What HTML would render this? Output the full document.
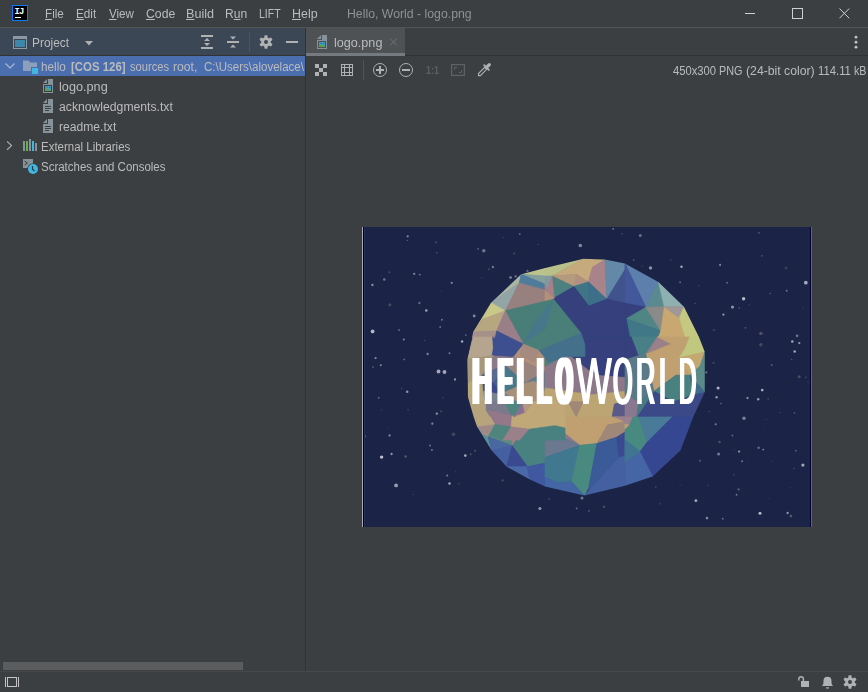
<!DOCTYPE html>
<html><head><meta charset="utf-8"><title>Hello, World - logo.png</title>
<style>
html,body{margin:0;padding:0;}
body{width:868px;height:692px;overflow:hidden;background:#3c3f41;position:relative;font-family:"Liberation Sans",sans-serif;font-size:12px;color:#bbbbbb;}
.a{position:absolute;}
svg{position:absolute;overflow:visible;}
.t{position:absolute;white-space:nowrap;line-height:14px;height:14px;transform-origin:0 0;}
.t span{display:inline-block;}
.g{position:absolute;font-family:"Liberation Sans",sans-serif;font-size:200px;line-height:200px;color:#fff;transform-origin:0 0;white-space:nowrap;}
u{text-decoration:underline;text-underline-offset:1px;text-decoration-thickness:1px;}
</style></head><body>
<!-- menubar -->
<div class="a" style="left:0;top:27px;width:868px;height:1px;background:#555351;"></div>
<svg style="left:12px;top:5px" width="16" height="16" viewBox="0 0 16 16"><rect x="0.5" y="0.5" width="15" height="15" fill="#000" stroke="#087cfa"/><rect x="3" y="12" width="6" height="1" fill="#fff"/><text x="2.5 6.900" y="9" font-family="Liberation Mono, monospace" font-weight="bold" font-size="8.800" fill="#fff" transform="translate(0 0)">IJ</text></svg>
<div class="t" style="left:44.6px;top:7px;transform:scaleX(0.972);"><u>F</u>ile</div>
<div class="t" style="left:75.6px;top:7px;transform:scaleX(0.975);"><u>E</u>dit</div>
<div class="t" style="left:108.9px;top:7px;transform:scaleX(0.966);"><u>V</u>iew</div>
<div class="t" style="left:145.6px;top:7px;transform:scaleX(1.02);"><u>C</u>ode</div>
<div class="t" style="left:186.1px;top:7px;transform:scaleX(1.051);"><u>B</u>uild</div>
<div class="t" style="left:225.2px;top:7px;transform:scaleX(1.007);">R<u>u</u>n</div>
<div class="t" style="left:259.1px;top:7px;transform:scaleX(0.873);">LIFT</div>
<div class="t" style="left:291.6px;top:7px;transform:scaleX(1.035);"><u>H</u>elp</div>
<div class="t" style="left:347.2px;top:7px;transform:scaleX(1.023);color:#8f9192">Hello, World - logo.png</div>
<svg style="left:738px;top:0" width="130" height="27" viewBox="0 0 130 27" fill="none" stroke="#cfcfcf" stroke-width="1"><path d="M7 13.5H17"/><rect x="54.5" y="8.5" width="10" height="10"/><path d="M101.500 8.500L111.200 18.200M111.200 8.500L101.500 18.200"/></svg>

<!-- sidebar -->
<div class="a" style="left:0;top:28px;width:305px;height:27px;background:#3b4754;"></div>
<div class="a" style="left:0;top:55px;width:868px;height:1px;background:#323232;"></div>
<svg style="left:12px;top:34px" width="16" height="16" viewBox="0 0 16 16"><rect x="1" y="2" width="14" height="13" fill="#8c98a2"/><rect x="2" y="5" width="12" height="9" fill="#3b4754"/><rect x="3" y="6" width="10" height="7" fill="#3d87ab"/></svg>
<div class="t" style="left:31.8px;top:36px;transform:scaleX(0.99);">Project</div>
<svg style="left:80px;top:34px" width="16" height="16" viewBox="0 0 16 16"><path d="M5 7H13L9 11.5Z" fill="#aeb0b2"/></svg>
<svg style="left:199px;top:34px" width="16" height="16" viewBox="0 0 16 16" fill="#afb1b3"><rect x="2" y="1" width="12" height="2"/><rect x="2" y="13" width="12" height="2"/><path d="M8 4L11 7H5ZM8 12L5 9H11Z"/></svg>
<svg style="left:225px;top:34px" width="16" height="16" viewBox="0 0 16 16" fill="#afb1b3"><rect x="2" y="7" width="12" height="2"/><path d="M8 5.5L5 2.5H11ZM8 10.5L11 13.5H5Z"/></svg>
<div class="a" style="left:249px;top:32px;width:1px;height:20px;background:#55524f;"></div>
<svg style="left:258px;top:34px" width="16" height="16" viewBox="0 0 16 16"><g id="gear" fill="#afb1b3"><path fill-rule="evenodd" d="M6.20 3.66L6.65 1.30L9.35 1.30L9.80 3.66L10.35 3.93L10.86 4.27L13.13 3.48L14.48 5.82L12.66 7.39L12.70 8.00L12.66 8.61L14.48 10.18L13.13 12.52L10.86 11.73L10.35 12.07L9.80 12.34L9.35 14.70L6.65 14.70L6.20 12.34L5.65 12.07L5.14 11.73L2.87 12.52L1.52 10.18L3.34 8.61L3.30 8.00L3.34 7.39L1.52 5.82L2.87 3.48L5.14 4.27L5.65 3.93ZM8 6.0a2.0 2.0 0 100 4.0a2.0 2.0 0 100 -4.0z"/></g></svg>
<svg style="left:284px;top:34px" width="16" height="16" viewBox="0 0 16 16" fill="#afb1b3"><rect x="2" y="7" width="12" height="2"/></svg>

<div class="a" style="left:0;top:56px;width:305px;height:20px;background:#4b6eaf;"></div>
<svg style="left:2px;top:58px" width="16" height="16" viewBox="0 0 16 16" fill="none" stroke="#a9b7d0" stroke-width="1.2"><path d="M3.5 5.5L8 10L12.5 5.5"/></svg>
<svg style="left:22px;top:58px" width="16" height="16" viewBox="0 0 16 16"><path d="M1 2.5H6.5L8.3 4.5H15V9H9V13H1Z" fill="#8c9fbd"/><rect x="10" y="10" width="6" height="6" fill="#40b6e0"/></svg>
<div class="a" style="left:41px;top:56px;width:264px;height:20px;overflow:hidden"><div class="t" style="left:0.4px;top:4px;transform:scaleX(0.978);">hello</div><div class="t" style="left:29.7px;top:4px;transform:scaleX(0.951);"><b>[COS 126]</b></div><div class="t" style="left:89.4px;top:4px;transform:scaleX(0.931);">sources</div><div class="t" style="left:132.1px;top:4px;transform:scaleX(1.014);">root,</div><div class="t" style="left:162.5px;top:4px;transform:scaleX(0.961);">C:\Users\alovelace\</div></div>

<svg style="left:40px;top:78px" width="16" height="16" viewBox="0 0 16 16"><g id="imgico"><path d="M7 1L3 5H7Z" fill="#87939a"/><path fill-rule="evenodd" d="M8 1V6H3V15H13V1ZM4 7H12V14H4Z" fill="#87939a"/><rect x="5" y="8" width="6" height="5" fill="#3d9fca"/><circle cx="9.6" cy="9.6" r="0.65" fill="#3a5a68"/><path d="M5.600 9.200H8" stroke="#3a6a80" stroke-width="0.600"/><path d="M5 13V11.2C6 10.300 6.800 10 7.500 10.500C8.500 11.200 9.500 12 11 12.200V13Z" fill="#5da047"/></g></svg>
<div class="t" style="left:58.7px;top:80px;transform:scaleX(1.058);">logo.png</div>
<svg style="left:40px;top:98px" width="16" height="16" viewBox="0 0 16 16"><g id="txtico"><path d="M7 1L3 5H7Z" fill="#87939a"/><path d="M8 1V6H3V15H13V1Z" fill="#87939a"/><path d="M5 12H9V13H5ZM5 10H11V11H5ZM5 8H11V9H5Z" fill="#3d4144"/></g></svg>
<div class="t" style="left:59px;top:100px;transform:scaleX(1.016);">acknowledgments.txt</div>
<svg style="left:40px;top:118px" width="16" height="16" viewBox="0 0 16 16"><use href="#txtico"/></svg>
<div class="t" style="left:58.8px;top:120px;transform:scaleX(1.01);">readme.txt</div>
<svg style="left:2px;top:138px" width="16" height="16" viewBox="0 0 16 16" fill="none" stroke="#adadad" stroke-width="1.2"><path d="M5.100 3.400L9.500 7.600L5.100 11.800"/></svg>
<svg style="left:22px;top:137px" width="16" height="16" viewBox="0 0 16 16"><rect x="1" y="4" width="2" height="10" fill="#87939a"/><rect x="4" y="4" width="2" height="10" fill="#62b543"/><rect x="7" y="2" width="2" height="12" fill="#87939a"/><rect x="10" y="4" width="2" height="10" fill="#40b6e0"/><rect x="13" y="6" width="2" height="8" fill="#87939a"/></svg>
<div class="t" style="left:40.9px;top:140px;transform:scaleX(0.956);">External Libraries</div>
<svg style="left:22px;top:158px" width="16" height="16" viewBox="0 0 16 16"><path d="M1 1H11V5.4A5.6 5.6 0 005.4 10H1Z" fill="#87939a"/><path d="M2.5 3L5.5 5L2.5 7" fill="none" stroke="#3c3f41" stroke-width="1"/><circle cx="11" cy="11" r="5" fill="#40b6e0"/><path d="M10.5 8V11.3L12.5 13" fill="none" stroke="#2b3a42" stroke-width="1.2"/></svg>
<div class="t" style="left:41px;top:160px;transform:scaleX(0.957);">Scratches and Consoles</div>
<div class="a" style="left:3px;top:662px;width:240px;height:8px;background:#5a5c5e;"></div>
<div class="a" style="left:305px;top:28px;width:1px;height:643px;background:#323232;"></div>

<!-- editor -->
<div class="a" style="left:306px;top:28px;width:99px;height:25px;background:#4e5254;"></div>
<div class="a" style="left:306px;top:53px;width:99px;height:3px;background:#747a80;"></div>
<svg style="left:314px;top:34px" width="16" height="16" viewBox="0 0 16 16"><use href="#imgico"/></svg>
<div class="t" style="left:333.9px;top:36px;transform:scaleX(1.051);">logo.png</div>
<svg style="left:385px;top:34px" width="16" height="16" viewBox="0 0 16 16" fill="none" stroke="#6e7274" stroke-width="1"><path d="M5 4.5L12 11.5M12 4.5L5 11.5"/></svg>
<svg style="left:848px;top:34px" width="16" height="16" viewBox="0 0 16 16" fill="#c4c4c4"><circle cx="8" cy="3.2" r="1.4"/><circle cx="8" cy="8.2" r="1.4"/><circle cx="8" cy="13.2" r="1.4"/></svg>

<svg style="left:313px;top:62px" width="16" height="16" viewBox="0 0 16 16" fill="#afb1b3"><rect x="2" y="2" width="4" height="4"/><rect x="10" y="2" width="4" height="4"/><rect x="6" y="6" width="4" height="4"/><rect x="2" y="10" width="4" height="4"/><rect x="10" y="10" width="4" height="4"/></svg>
<svg style="left:339px;top:62px" width="16" height="16" viewBox="0 0 16 16" fill="none" stroke="#afb1b3" stroke-width="1"><rect x="2.5" y="2.5" width="11" height="11"/><path d="M5.5 2.5V13.5M10.5 2.5V13.5M2.5 5.5H13.5M2.5 10.5H13.5"/></svg>
<div class="a" style="left:363px;top:60px;width:1px;height:20px;background:#55524f;"></div>
<svg style="left:372px;top:62px" width="16" height="16" viewBox="0 0 16 16" fill="none" stroke="#afb1b3"><circle cx="8" cy="8" r="6.5"/><path d="M4 8H12M8 4V12" stroke-width="2"/></svg>
<svg style="left:398px;top:62px" width="16" height="16" viewBox="0 0 16 16" fill="none" stroke="#afb1b3"><circle cx="8" cy="8" r="6.5"/><path d="M4 8H12" stroke-width="2"/></svg>
<div class="t" style="left:425.6px;top:63px;font-weight:bold;color:#5e6060;font-size:11.5px;transform:scaleX(0.78)">1:1</div>
<svg style="left:450px;top:62px" width="16" height="16" viewBox="0 0 16 16" fill="none" stroke="#5e6162"><rect x="1.6" y="2.600" width="12.800" height="10.800" stroke-width="1.300"/><path d="M4.500 8V5.500H7M11.500 8V10.500H9"/></svg>
<svg style="left:476px;top:62px" width="16" height="16" viewBox="0 0 16 16"><path d="M2.5 13.6V11.6L8.7 5.4L10.6 7.300L4.400 13.600Z" fill="none" stroke="#afb1b3" stroke-width="1.1"/><path d="M8.2 3.2L12.800 7.800" stroke="#afb1b3" stroke-width="1.9" fill="none" stroke-linecap="round"/><path d="M10.800 5.200L13.300 2.700" stroke="#afb1b3" stroke-width="3.300" fill="none" stroke-linecap="round"/></svg>
<div class="t" style="left:673px;top:64px;transform:scaleX(0.936);">450x300</div><div class="t" style="left:718.5px;top:64px;transform:scaleX(0.899);">PNG</div><div class="t" style="left:745.7px;top:64px;transform:scaleX(1.021);">(24-bit</div><div class="t" style="left:783.5px;top:64px;transform:scaleX(1.023);">color)</div><div class="t" style="left:817.5px;top:64px;transform:scaleX(0.941);">114.11</div><div class="t" style="left:853.6px;top:64px;transform:scaleX(0.894);">kB</div>
<div class="a" id="img" style="left:362px;top:227px;width:450px;height:300px;overflow:hidden;background:#1b2347"><svg style="left:0;top:0" width="450" height="300" viewBox="0 0 450 300">
<rect width="450" height="300" fill="#1b2347"/>
<clipPath id="gc"><polygon points="105.2,133 111.1,105.1 129,75.7 159.1,47.3 183,41 221.2,31.7 243.1,32.5 263,36.4 296.5,54.9 322,79.7 337,110 342.8,125 342.8,165 331.2,190 318.5,223.5 290.7,249.5 263,258.8 222.3,268.6 183,259.4 167.7,252.4 144.6,239.7 129.6,223.5 115.1,199.8 111.7,190 105.9,170.1"/></clipPath>
<filter id="bl" x="-5%" y="-5%" width="110%" height="110%"><feGaussianBlur stdDeviation="0.6"/></filter><g clip-path="url(#gc)"><g filter="url(#bl)"><polygon points="105.2,133 111.1,105.1 129,75.7 159.1,47.3 183,41 221.2,31.7 243.1,32.5 263,36.4 296.5,54.9 322,79.7 337,110 342.8,125 342.8,165 331.2,190 318.5,223.5 290.7,249.5 263,258.8 222.3,268.6 183,259.4 167.7,252.4 144.6,239.7 129.6,223.5 115.1,199.8 111.7,190 105.9,170.1" fill="#34407c"/>
<polygon points="129.0,75.7 159.1,47.3 157.3,56.0" fill="#aab6a2" stroke="#aab6a2" stroke-width="0.7"/>
<polygon points="129.0,75.7 157.3,56.0 143.5,83.8" fill="#93a4a6" stroke="#93a4a6" stroke-width="0.7"/>
<polygon points="159.1,47.3 183.0,41.0 183.0,49.1" fill="#bcc48e" stroke="#bcc48e" stroke-width="0.7"/>
<polygon points="159.1,47.3 183.0,49.1 183.0,57.2" fill="#85a09a" stroke="#85a09a" stroke-width="0.7"/>
<polygon points="159.1,47.3 183.0,57.2 183.0,62.9 157.3,56.0" fill="#4f7c9c" stroke="#4f7c9c" stroke-width="0.7"/>
<polygon points="157.3,56.0 183.0,62.9 183.0,76.2 143.5,83.8" fill="#98807f" stroke="#98807f" stroke-width="0.7"/>
<polygon points="129.0,75.7 143.5,83.8 120.3,92.4" fill="#c8c888" stroke="#c8c888" stroke-width="0.7"/>
<polygon points="129.0,75.7 120.3,92.4 111.1,105.1" fill="#c2be88" stroke="#c2be88" stroke-width="0.7"/>
<polygon points="120.3,92.4 143.5,83.8 135.4,104.0 111.1,105.1" fill="#b8a680" stroke="#b8a680" stroke-width="0.7"/>
<polygon points="111.1,105.1 135.4,104.0 133.1,110.0 109.9,110.0" fill="#a8908a" stroke="#a8908a" stroke-width="0.7"/>
<polygon points="183.0,41.0 221.2,31.7 189.9,49.1 183.0,49.1" fill="#b9c089" stroke="#b9c089" stroke-width="0.7"/>
<polygon points="221.2,31.7 243.1,32.5 230.4,40.4 226.4,54.9 214.2,47.3 189.9,49.1" fill="#c4aa7c" stroke="#c4aa7c" stroke-width="0.7"/>
<polygon points="214.2,47.3 226.4,54.9 211.9,59.5" fill="#b29080" stroke="#b29080" stroke-width="0.7"/>
<polygon points="189.9,49.1 214.2,47.3 211.9,59.5" fill="#b69a7e" stroke="#b69a7e" stroke-width="0.7"/>
<polygon points="230.4,40.4 243.1,32.5 244.8,72.2 226.4,54.9" fill="#a8848a" stroke="#a8848a" stroke-width="0.7"/>
<polygon points="243.1,32.5 263.0,35.8 263.0,42.7 244.8,72.2" fill="#6388a8" stroke="#6388a8" stroke-width="0.7"/>
<polygon points="263.0,42.7 263.0,76.2 244.8,72.2" fill="#3f528c" stroke="#3f528c" stroke-width="0.7"/>
<polygon points="189.9,49.1 211.9,59.5 192.2,71.0" fill="#4f8080" stroke="#4f8080" stroke-width="0.7"/>
<polygon points="211.9,59.5 226.4,54.9 226.9,79.1" fill="#3f7585" stroke="#3f7585" stroke-width="0.7"/>
<polygon points="226.4,54.9 244.8,72.2 226.9,79.1" fill="#3d7088" stroke="#3d7088" stroke-width="0.7"/>
<polygon points="192.2,71.0 211.9,59.5 226.9,79.1 244.8,72.2 263.0,76.2 263.0,110.0 220.0,106.3" fill="#34407c" stroke="#34407c" stroke-width="0.7"/>
<polygon points="183.0,49.1 189.9,49.1 185.3,62.9 183.0,57.2" fill="#7f9aa0" stroke="#7f9aa0" stroke-width="0.7"/>
<polygon points="189.9,49.1 192.2,71.0 183.0,63.5 185.3,62.9" fill="#a88088" stroke="#a88088" stroke-width="0.7"/>
<polygon points="183.0,57.2 185.3,62.9 183.0,63.5" fill="#a88088" stroke="#a88088" stroke-width="0.7"/>
<polygon points="183.0,63.5 192.2,71.0 183.0,76.2" fill="#b39078" stroke="#b39078" stroke-width="0.7"/>
<polygon points="263.0,36.4 296.5,54.9 283.8,80.3" fill="#5c7fac" stroke="#5c7fac" stroke-width="0.7"/>
<polygon points="263.0,36.4 283.8,80.3 263.0,76.2" fill="#43589a" stroke="#43589a" stroke-width="0.7"/>
<polygon points="296.5,54.9 302.3,79.7 283.8,80.3" fill="#5a8a90" stroke="#5a8a90" stroke-width="0.7"/>
<polygon points="296.5,54.9 322.0,79.7 302.3,79.7" fill="#8fb0b0" stroke="#8fb0b0" stroke-width="0.7"/>
<polygon points="263.0,76.2 283.8,80.3 264.2,91.8 263.0,91.3" fill="#34407c" stroke="#34407c" stroke-width="0.7"/>
<polygon points="283.8,80.3 298.8,104.0 264.2,91.8" fill="#4f8585" stroke="#4f8585" stroke-width="0.7"/>
<polygon points="264.2,91.8 298.8,104.0 296.5,110.0 267.6,110.0" fill="#3f7888" stroke="#3f7888" stroke-width="0.7"/>
<polygon points="263.0,91.3 264.2,91.8 267.6,110.0 263.0,110.0" fill="#34407c" stroke="#34407c" stroke-width="0.7"/>
<polygon points="283.8,80.3 302.3,79.7 298.8,104.0" fill="#8a8a88" stroke="#8a8a88" stroke-width="0.7"/>
<polygon points="302.3,79.7 317.3,90.7 323.1,110.0 296.5,110.0 298.8,104.0" fill="#c8a870" stroke="#c8a870" stroke-width="0.7"/>
<polygon points="302.3,79.7 322.0,79.7 317.3,90.7" fill="#a09898" stroke="#a09898" stroke-width="0.7"/>
<polygon points="322.0,79.7 337.0,110.0 323.1,110.0 317.3,90.7" fill="#c5c880" stroke="#c5c880" stroke-width="0.7"/>
<polygon points="111.1,110.0 130.7,110.0 131.9,128.5 105.3,132.0" fill="#b5a48e" stroke="#b5a48e" stroke-width="0.7"/>
<polygon points="130.7,110.0 160.8,116.9 152.1,129.7 131.9,128.5" fill="#3f4f8c" stroke="#3f4f8c" stroke-width="0.7"/>
<polygon points="130.7,110.0 149.2,110.0 160.8,116.9" fill="#8a7890" stroke="#8a7890" stroke-width="0.7"/>
<polygon points="149.2,110.0 183.0,110.0 183.0,114.6 160.8,116.9" fill="#4a7a80" stroke="#4a7a80" stroke-width="0.7"/>
<polygon points="160.8,116.9 183.0,114.6 183.0,144.7 152.1,129.7" fill="#b09078" stroke="#b09078" stroke-width="0.7"/>
<polygon points="105.3,132.0 131.9,128.5 120.3,148.2 105.9,156.2" fill="#a8987a" stroke="#a8987a" stroke-width="0.7"/>
<polygon points="105.9,156.2 120.3,148.2 121.5,164.3 105.9,170.1" fill="#b8a878" stroke="#b8a878" stroke-width="0.7"/>
<polygon points="131.9,128.5 152.1,129.7 142.3,137.7 120.3,148.2" fill="#8a7a8a" stroke="#8a7a8a" stroke-width="0.7"/>
<polygon points="142.3,137.7 152.1,129.7 183.0,144.7 163.1,156.2" fill="#9a8480" stroke="#9a8480" stroke-width="0.7"/>
<polygon points="120.3,148.2 142.3,137.7 131.9,156.2" fill="#5a6a90" stroke="#5a6a90" stroke-width="0.7"/>
<polygon points="142.3,137.7 163.1,156.2 142.3,165.5" fill="#4a7888" stroke="#4a7888" stroke-width="0.7"/>
<polygon points="120.3,148.2 131.9,156.2 141.2,167.8 121.5,164.3" fill="#3b4a88" stroke="#3b4a88" stroke-width="0.7"/>
<polygon points="131.9,156.2 142.3,137.7 142.3,165.5 141.2,167.8" fill="#44608c" stroke="#44608c" stroke-width="0.7"/>
<polygon points="163.1,156.2 183.0,144.7 183.0,164.3 172.4,153.9" fill="#5a7a88" stroke="#5a7a88" stroke-width="0.7"/>
<polygon points="163.1,156.2 172.4,153.9 183.0,164.3 183.0,174.7 160.8,179.4 142.3,165.5" fill="#a89078" stroke="#a89078" stroke-width="0.7"/>
<polygon points="105.9,170.1 121.5,164.3 123.8,179.4 109.9,190.0" fill="#b8a67c" stroke="#b8a67c" stroke-width="0.7"/>
<polygon points="121.5,164.3 141.2,167.8 142.3,165.5 160.8,179.4 123.8,179.4" fill="#7a8490" stroke="#7a8490" stroke-width="0.7"/>
<polygon points="123.8,179.4 160.8,179.4 149.2,190.0 109.9,190.0" fill="#6a7f88" stroke="#6a7f88" stroke-width="0.7"/>
<polygon points="160.8,179.4 183.0,174.7 183.0,190.0 149.2,190.0" fill="#b09a7a" stroke="#b09a7a" stroke-width="0.7"/>
<polygon points="183.0,110.0 215.4,110.0 206.1,127.3 183.0,140.1" fill="#4a8080" stroke="#4a8080" stroke-width="0.7"/>
<polygon points="215.4,110.0 263.0,110.0 263.0,150.5 232.7,148.2 206.1,127.3" fill="#34407c" stroke="#34407c" stroke-width="0.7"/>
<polygon points="183.0,140.1 206.1,127.3 232.7,148.2 263.0,150.5 263.0,164.3 229.2,167.8 183.0,160.9" fill="#8c7888" stroke="#8c7888" stroke-width="0.7"/>
<polygon points="183.0,160.9 229.2,167.8 263.0,164.3 263.0,174.7 252.4,177.1 250.1,190.0 183.0,190.0" fill="#bca473" stroke="#bca473" stroke-width="0.7"/>
<polygon points="206.1,174.7 221.2,174.7 214.2,190.0" fill="#a08878" stroke="#a08878" stroke-width="0.7"/>
<polygon points="252.4,177.1 263.0,174.7 263.0,190.0 250.1,190.0" fill="#5a5a88" stroke="#5a5a88" stroke-width="0.7"/>
<polygon points="263.0,110.0 269.9,110.0 276.9,128.5 263.0,133.1" fill="#34407c" stroke="#34407c" stroke-width="0.7"/>
<polygon points="269.9,110.0 295.4,110.0 283.8,127.3 276.9,128.5" fill="#4a8088" stroke="#4a8088" stroke-width="0.7"/>
<polygon points="295.4,110.0 309.2,116.9 283.8,127.3" fill="#9a8088" stroke="#9a8088" stroke-width="0.7"/>
<polygon points="295.4,110.0 327.7,110.0 323.1,121.6 317.3,130.8 327.7,148.2 313.9,148.2 291.9,164.3 283.8,127.3 309.2,116.9" fill="#c0a070" stroke="#c0a070" stroke-width="0.7"/>
<polygon points="327.7,110.0 337.0,110.0 343.0,123.9 343.0,125.0 317.3,130.8 323.1,121.6" fill="#c0c880" stroke="#c0c880" stroke-width="0.7"/>
<polygon points="317.3,130.8 343.0,125.0 338.1,138.9 327.7,148.2" fill="#c4a870" stroke="#c4a870" stroke-width="0.7"/>
<polygon points="338.1,138.9 343.0,125.0 343.0,165.5 327.7,148.2" fill="#5a8a88" stroke="#5a8a88" stroke-width="0.7"/>
<polygon points="291.9,164.3 313.9,148.2 327.7,148.2 332.4,167.8 311.6,174.7" fill="#4a8080" stroke="#4a8080" stroke-width="0.7"/>
<polygon points="327.7,148.2 343.0,165.5 332.4,167.8" fill="#3f6a8a" stroke="#3f6a8a" stroke-width="0.7"/>
<polygon points="274.6,190.0 291.9,164.3 311.6,174.7 332.4,167.8 343.0,165.5 343.0,190.0" fill="#3a4a88" stroke="#3a4a88" stroke-width="0.7"/>
<polygon points="263.0,167.8 276.9,174.7 274.6,190.0 263.0,190.0" fill="#8a7890" stroke="#8a7890" stroke-width="0.7"/>
<polygon points="263.0,133.1 276.9,128.5 283.8,127.3 291.9,164.3 276.9,174.7 263.0,167.8" fill="#5a7a88" stroke="#5a7a88" stroke-width="0.7"/>
<polygon points="276.9,174.7 291.9,164.3 274.6,190.0" fill="#4a7a80" stroke="#4a7a80" stroke-width="0.7"/>
<polygon points="109.9,190.0 129.6,190.0 133.1,199.2 115.1,199.8" fill="#b8a080" stroke="#b8a080" stroke-width="0.7"/>
<polygon points="129.6,190.0 151.6,190.0 149.2,200.4 133.1,199.2" fill="#9a7a8a" stroke="#9a7a8a" stroke-width="0.7"/>
<polygon points="151.6,190.0 183.0,190.0 183.0,201.6 159.6,205.0 149.2,200.4" fill="#c0a070" stroke="#c0a070" stroke-width="0.7"/>
<polygon points="115.1,199.8 133.1,199.2 126.1,209.7 120.3,207.3" fill="#b09080" stroke="#b09080" stroke-width="0.7"/>
<polygon points="115.1,199.8 120.3,207.3 126.1,209.7 129.6,223.5" fill="#5a9098" stroke="#5a9098" stroke-width="0.7"/>
<polygon points="133.1,199.2 149.2,200.4 150.4,218.9 126.1,209.7" fill="#5a8a80" stroke="#5a8a80" stroke-width="0.7"/>
<polygon points="149.2,200.4 159.6,205.0 150.4,218.9" fill="#a08088" stroke="#a08088" stroke-width="0.7"/>
<polygon points="159.6,205.0 183.0,201.6 183.0,236.2 165.4,239.7 150.4,218.9" fill="#4a8080" stroke="#4a8080" stroke-width="0.7"/>
<polygon points="126.1,209.7 150.4,218.9 129.6,223.5" fill="#4a68a0" stroke="#4a68a0" stroke-width="0.7"/>
<polygon points="129.6,223.5 150.4,218.9 144.6,239.7" fill="#4560a0" stroke="#4560a0" stroke-width="0.7"/>
<polygon points="150.4,218.9 165.4,239.7 144.6,239.7" fill="#3a4a90" stroke="#3a4a90" stroke-width="0.7"/>
<polygon points="144.6,239.7 165.4,239.7 167.7,252.4" fill="#4a68a8" stroke="#4a68a8" stroke-width="0.7"/>
<polygon points="165.4,239.7 183.0,236.2 183.0,259.4 167.7,252.4" fill="#3f58a0" stroke="#3f58a0" stroke-width="0.7"/>
<polygon points="183.0,190.0 263.0,190.0 263.0,194.6 245.4,198.1 235.0,216.6 217.7,218.3 193.4,199.2 183.0,201.6" fill="#c0a070" stroke="#c0a070" stroke-width="0.7"/>
<polygon points="252.4,190.0 263.0,190.0 263.0,194.6" fill="#9a8090" stroke="#9a8090" stroke-width="0.7"/>
<polygon points="245.4,198.1 263.0,194.6 263.0,205.0 254.7,210.2 235.0,216.6" fill="#a08878" stroke="#a08878" stroke-width="0.7"/>
<polygon points="183.0,201.6 193.4,199.2 217.7,218.3" fill="#8a7890" stroke="#8a7890" stroke-width="0.7"/>
<polygon points="183.0,201.6 217.7,218.3 183.0,230.5" fill="#6c7890" stroke="#6c7890" stroke-width="0.7"/>
<polygon points="183.0,230.5 217.7,218.3 209.6,254.7 195.7,255.9 183.0,250.1" fill="#3f7890" stroke="#3f7890" stroke-width="0.7"/>
<polygon points="217.7,218.3 235.0,216.6 226.9,259.4 222.3,268.6 209.6,254.7" fill="#4a8a80" stroke="#4a8a80" stroke-width="0.7"/>
<polygon points="235.0,216.6 254.7,210.2 257.0,230.5 226.9,264.0 226.9,259.4" fill="#3a5a98" stroke="#3a5a98" stroke-width="0.7"/>
<polygon points="254.7,210.2 263.0,205.0 263.0,229.3 257.0,230.5" fill="#3a4a90" stroke="#3a4a90" stroke-width="0.7"/>
<polygon points="257.0,230.5 263.0,229.3 263.0,259.4 222.3,270.0 222.3,268.6 226.9,264.0" fill="#4560a0" stroke="#4560a0" stroke-width="0.7"/>
<polygon points="183.0,250.1 195.7,255.9 209.6,254.7 222.3,268.6 222.3,270.0 183.0,260.5" fill="#4466a4" stroke="#4466a4" stroke-width="0.7"/>
<polygon points="263.0,190.0 271.1,190.0 267.6,198.1 263.0,196.9" fill="#9a8090" stroke="#9a8090" stroke-width="0.7"/>
<polygon points="263.0,196.9 267.6,198.1 263.0,202.7" fill="#c0a070" stroke="#c0a070" stroke-width="0.7"/>
<polygon points="271.1,190.0 276.9,190.0 285.0,215.4 278.0,224.7 263.0,213.1 263.0,202.7 267.6,198.1" fill="#4a8a80" stroke="#4a8a80" stroke-width="0.7"/>
<polygon points="276.9,190.0 310.4,190.0 285.0,215.4" fill="#4a7a98" stroke="#4a7a98" stroke-width="0.7"/>
<polygon points="310.4,190.0 332.4,190.0 318.5,223.5 290.7,249.5 278.0,224.7 285.0,215.4" fill="#354690" stroke="#354690" stroke-width="0.7"/>
<polygon points="263.0,213.1 278.0,224.7 290.7,249.5 263.0,259.4" fill="#4565a5" stroke="#4565a5" stroke-width="0.7"/>
<polygon points="263.0,213.1 278.0,224.7 263.0,235.1" fill="#3f7492" stroke="#3f7492" stroke-width="0.7"/>
<polygon points="143.2,83.8 191.6,72.3 161.3,117.1" fill="#4a7e78" stroke="#4a7e78" stroke-width="0.7"/>
<polygon points="191.6,72.3 183.7,101.9 161.3,117.1 172.1,96.1" fill="#45788a" stroke="#45788a" stroke-width="0.7"/>
<polygon points="191.6,72.3 219.1,106.2 177.2,123.6 161.3,117.1 183.7,101.9" fill="#497f78" stroke="#497f78" stroke-width="0.7"/>
<polygon points="143.2,83.8 161.3,117.1 134.6,104.1" fill="#9a7f88" stroke="#9a7f88" stroke-width="0.7"/>
<polygon points="134.6,104.1 161.3,117.1 150.5,129.4 130.2,127.9" fill="#3d4f8e" stroke="#3d4f8e" stroke-width="0.7"/>
<polygon points="161.3,117.1 177.2,123.6 172.1,135.1 157.7,127.9" fill="#a58a80" stroke="#a58a80" stroke-width="0.7"/>
<polygon points="177.2,123.6 219.1,106.2 223.0,117.8 223.0,129.4 203.9,129.4 186.6,135.1" fill="#44708c" stroke="#44708c" stroke-width="0.7"/>
<polygon points="103.0,174.5 123.7,174.5 123.7,183.7 133.0,197.6 115.7,199.9 109.9,186.0" fill="#b8a47c" stroke="#b8a47c" stroke-width="0.7"/>
<polygon points="123.7,174.5 142.2,174.5 150.2,188.9 124.9,183.2" fill="#7a7a8c" stroke="#7a7a8c" stroke-width="0.7"/>
<polygon points="142.2,174.5 160.6,174.5 152.5,190.1 150.2,188.9" fill="#4f8580" stroke="#4f8580" stroke-width="0.7"/>
<polygon points="124.9,183.2 150.2,188.9 149.1,198.7 134.1,197.6" fill="#94788a" stroke="#94788a" stroke-width="0.7"/>
<polygon points="150.2,188.9 152.5,190.1 160.6,174.5 162.9,186.0" fill="#8a7090" stroke="#8a7090" stroke-width="0.7"/>
<polygon points="152.5,190.6 162.9,186.0 172.1,174.5 203.0,174.5 203.0,201.0 192.9,198.7 167.5,202.2 149.1,199.9 150.2,188.9" fill="#c0a878" stroke="#c0a878" stroke-width="0.7"/>
<polygon points="160.6,174.5 172.1,174.5 162.9,186.0" fill="#b09a80" stroke="#b09a80" stroke-width="0.7"/>
<polygon points="115.7,199.9 133.0,197.6 127.2,207.9 120.3,205.6" fill="#a08a88" stroke="#a08a88" stroke-width="0.7"/>
<polygon points="133.0,197.6 149.1,199.9 141.0,213.0 127.2,207.9" fill="#4f857c" stroke="#4f857c" stroke-width="0.7"/>
<polygon points="149.1,199.9 167.5,202.2 158.3,213.0 141.0,213.0" fill="#9a8088" stroke="#9a8088" stroke-width="0.7"/>
<polygon points="167.5,202.2 192.9,198.7 203.0,201.0 203.0,213.0 158.3,213.0" fill="#4a8080" stroke="#4a8080" stroke-width="0.7"/>
</g></g>
<filter id="sb"><feGaussianBlur stdDeviation="0.3"/></filter><g filter="url(#sb)"><circle cx="45.7" cy="9.3" r="1.14" fill="#e6e6f0" opacity="0.51"/><circle cx="45.3" cy="13.6" r="0.76" fill="#e6e6f0" opacity="0.26"/><circle cx="73.9" cy="15.3" r="0.95" fill="#b39f8c" opacity="0.34"/><circle cx="74.7" cy="25.7" r="0.76" fill="#e6e6f0" opacity="0.26"/><circle cx="27.3" cy="45.3" r="1.14" fill="#b39f8c" opacity="0.26"/><circle cx="22.3" cy="52.6" r="1.23" fill="#e6e6f0" opacity="0.42"/><circle cx="10.4" cy="58.0" r="1.14" fill="#e6e6f0" opacity="0.59"/><circle cx="52.2" cy="46.8" r="1.14" fill="#e6e6f0" opacity="0.51"/><circle cx="57.8" cy="47.6" r="0.95" fill="#e6e6f0" opacity="0.42"/><circle cx="89.7" cy="55.9" r="1.04" fill="#e6e6f0" opacity="0.51"/><circle cx="27.9" cy="77.8" r="1.52" fill="#b39f8c" opacity="0.30"/><circle cx="57.4" cy="76.0" r="1.23" fill="#e6e6f0" opacity="0.34"/><circle cx="64.3" cy="83.4" r="1.23" fill="#e6e6f0" opacity="0.68"/><circle cx="79.9" cy="92.7" r="0.95" fill="#e6e6f0" opacity="0.42"/><circle cx="78.2" cy="99.9" r="0.95" fill="#e6e6f0" opacity="0.42"/><circle cx="112.2" cy="89.0" r="1.42" fill="#e6e6f0" opacity="0.51"/><circle cx="10.6" cy="104.4" r="1.90" fill="#e6e6f0" opacity="0.77"/><circle cx="37.0" cy="103.1" r="0.95" fill="#e6e6f0" opacity="0.42"/><circle cx="41.8" cy="112.5" r="1.04" fill="#e6e6f0" opacity="0.51"/><circle cx="103.8" cy="108.1" r="0.85" fill="#e6e6f0" opacity="0.34"/><circle cx="100.1" cy="114.4" r="1.23" fill="#e6e6f0" opacity="0.68"/><circle cx="65.6" cy="127.0" r="1.14" fill="#e6e6f0" opacity="0.51"/><circle cx="87.5" cy="126.3" r="1.04" fill="#e6e6f0" opacity="0.42"/><circle cx="13.6" cy="131.1" r="1.14" fill="#e6e6f0" opacity="0.51"/><circle cx="42.2" cy="132.4" r="0.95" fill="#e6e6f0" opacity="0.34"/><circle cx="18.8" cy="138.3" r="1.04" fill="#e6e6f0" opacity="0.51"/><circle cx="11.0" cy="140.0" r="0.85" fill="#e6e6f0" opacity="0.34"/><circle cx="76.5" cy="144.5" r="1.90" fill="#e6e6f0" opacity="0.68"/><circle cx="82.5" cy="145.0" r="1.90" fill="#e6e6f0" opacity="0.68"/><circle cx="116.1" cy="21.8" r="0.85" fill="#e6e6f0" opacity="0.34"/><circle cx="62.6" cy="113.5" r="0.76" fill="#e6e6f0" opacity="0.17"/><circle cx="78.9" cy="64.1" r="0.66" fill="#e6e6f0" opacity="0.13"/><circle cx="93.0" cy="152.5" r="1.14" fill="#e6e6f0" opacity="0.59"/><circle cx="45.2" cy="164.7" r="1.23" fill="#e6e6f0" opacity="0.59"/><circle cx="39.8" cy="161.4" r="0.76" fill="#e6e6f0" opacity="0.21"/><circle cx="16.7" cy="170.7" r="0.95" fill="#e6e6f0" opacity="0.34"/><circle cx="80.8" cy="170.9" r="0.85" fill="#b39f8c" opacity="0.21"/><circle cx="19.4" cy="182.9" r="0.66" fill="#e6e6f0" opacity="0.17"/><circle cx="46.1" cy="182.7" r="0.76" fill="#e6e6f0" opacity="0.21"/><circle cx="74.8" cy="186.7" r="1.14" fill="#e6e6f0" opacity="0.59"/><circle cx="79.2" cy="184.5" r="0.95" fill="#b39f8c" opacity="0.34"/><circle cx="70.3" cy="196.7" r="1.14" fill="#e6e6f0" opacity="0.51"/><circle cx="27.6" cy="208.5" r="1.14" fill="#e6e6f0" opacity="0.51"/><circle cx="25.2" cy="201.4" r="0.57" fill="#e6e6f0" opacity="0.13"/><circle cx="2.9" cy="209.4" r="1.14" fill="#e6e6f0" opacity="0.26"/><circle cx="91.5" cy="207.2" r="1.71" fill="#b39f8c" opacity="0.30"/><circle cx="68.1" cy="218.5" r="0.95" fill="#e6e6f0" opacity="0.42"/><circle cx="69.9" cy="223.0" r="0.95" fill="#e6e6f0" opacity="0.42"/><circle cx="19.6" cy="230.1" r="1.71" fill="#e6e6f0" opacity="0.81"/><circle cx="29.6" cy="227.0" r="1.14" fill="#e6e6f0" opacity="0.59"/><circle cx="43.6" cy="229.5" r="1.23" fill="#b39f8c" opacity="0.42"/><circle cx="103.3" cy="228.6" r="1.33" fill="#e6e6f0" opacity="0.68"/><circle cx="108.8" cy="227.2" r="1.04" fill="#b39f8c" opacity="0.34"/><circle cx="113.1" cy="223.7" r="0.85" fill="#e6e6f0" opacity="0.30"/><circle cx="85.2" cy="248.6" r="1.04" fill="#e6e6f0" opacity="0.42"/><circle cx="93.7" cy="244.1" r="0.66" fill="#e6e6f0" opacity="0.17"/><circle cx="87.5" cy="256.4" r="1.23" fill="#e6e6f0" opacity="0.68"/><circle cx="96.8" cy="256.8" r="0.76" fill="#e6e6f0" opacity="0.21"/><circle cx="34.1" cy="258.4" r="1.90" fill="#e6e6f0" opacity="0.64"/><circle cx="51.4" cy="267.5" r="0.76" fill="#b39f8c" opacity="0.21"/><circle cx="396.9" cy="5.8" r="0.85" fill="#e6e6f0" opacity="0.30"/><circle cx="399.8" cy="28.8" r="0.85" fill="#e6e6f0" opacity="0.26"/><circle cx="358.1" cy="37.9" r="1.04" fill="#e6e6f0" opacity="0.51"/><circle cx="424.0" cy="40.9" r="1.23" fill="#b39f8c" opacity="0.26"/><circle cx="365.1" cy="55.7" r="0.95" fill="#e6e6f0" opacity="0.34"/><circle cx="336.9" cy="58.5" r="0.85" fill="#b39f8c" opacity="0.21"/><circle cx="443.8" cy="55.7" r="1.90" fill="#e6e6f0" opacity="0.68"/><circle cx="424.7" cy="63.7" r="0.95" fill="#e6e6f0" opacity="0.42"/><circle cx="408.2" cy="66.5" r="0.76" fill="#e6e6f0" opacity="0.30"/><circle cx="381.6" cy="71.7" r="1.71" fill="#e6e6f0" opacity="0.77"/><circle cx="370.5" cy="79.9" r="1.52" fill="#e6e6f0" opacity="0.59"/><circle cx="377.2" cy="81.0" r="0.76" fill="#e6e6f0" opacity="0.34"/><circle cx="387.0" cy="77.8" r="0.66" fill="#e6e6f0" opacity="0.21"/><circle cx="361.4" cy="87.7" r="1.14" fill="#e6e6f0" opacity="0.59"/><circle cx="441.0" cy="80.8" r="0.76" fill="#b39f8c" opacity="0.17"/><circle cx="383.5" cy="100.8" r="0.85" fill="#e6e6f0" opacity="0.30"/><circle cx="351.9" cy="103.1" r="1.14" fill="#b39f8c" opacity="0.26"/><circle cx="398.9" cy="106.4" r="1.71" fill="#b39f8c" opacity="0.38"/><circle cx="398.9" cy="117.7" r="1.71" fill="#b39f8c" opacity="0.30"/><circle cx="435.1" cy="108.8" r="1.33" fill="#e6e6f0" opacity="0.42"/><circle cx="430.3" cy="114.4" r="1.23" fill="#e6e6f0" opacity="0.68"/><circle cx="437.3" cy="116.1" r="1.14" fill="#e6e6f0" opacity="0.59"/><circle cx="432.7" cy="124.4" r="1.23" fill="#e6e6f0" opacity="0.68"/><circle cx="429.7" cy="132.4" r="0.76" fill="#e6e6f0" opacity="0.26"/><circle cx="351.6" cy="135.9" r="1.14" fill="#b39f8c" opacity="0.26"/><circle cx="409.7" cy="138.0" r="0.95" fill="#e6e6f0" opacity="0.30"/><circle cx="344.3" cy="145.4" r="1.04" fill="#e6e6f0" opacity="0.42"/><circle cx="333.0" cy="76.5" r="0.76" fill="#e6e6f0" opacity="0.26"/><circle cx="437.2" cy="149.8" r="1.52" fill="#b39f8c" opacity="0.34"/><circle cx="443.8" cy="150.2" r="0.76" fill="#e6e6f0" opacity="0.26"/><circle cx="446.1" cy="155.1" r="0.66" fill="#e6e6f0" opacity="0.17"/><circle cx="356.1" cy="160.9" r="1.52" fill="#e6e6f0" opacity="0.72"/><circle cx="400.2" cy="163.1" r="1.33" fill="#e6e6f0" opacity="0.72"/><circle cx="354.6" cy="170.3" r="1.23" fill="#e6e6f0" opacity="0.59"/><circle cx="359.0" cy="176.5" r="0.85" fill="#e6e6f0" opacity="0.34"/><circle cx="385.5" cy="171.1" r="1.14" fill="#e6e6f0" opacity="0.59"/><circle cx="396.2" cy="172.3" r="1.23" fill="#e6e6f0" opacity="0.59"/><circle cx="406.2" cy="172.0" r="0.95" fill="#b39f8c" opacity="0.26"/><circle cx="347.2" cy="184.5" r="0.76" fill="#e6e6f0" opacity="0.21"/><circle cx="382.0" cy="191.2" r="1.71" fill="#e6e6f0" opacity="0.47"/><circle cx="417.8" cy="185.6" r="0.76" fill="#e6e6f0" opacity="0.17"/><circle cx="432.5" cy="185.8" r="0.85" fill="#e6e6f0" opacity="0.30"/><circle cx="404.4" cy="192.5" r="0.76" fill="#b39f8c" opacity="0.21"/><circle cx="353.7" cy="197.2" r="1.04" fill="#e6e6f0" opacity="0.47"/><circle cx="402.7" cy="203.0" r="0.57" fill="#e6e6f0" opacity="0.13"/><circle cx="370.4" cy="208.5" r="0.95" fill="#e6e6f0" opacity="0.34"/><circle cx="357.5" cy="215.0" r="1.33" fill="#b39f8c" opacity="0.34"/><circle cx="396.6" cy="220.8" r="1.23" fill="#e6e6f0" opacity="0.38"/><circle cx="401.3" cy="222.6" r="0.95" fill="#e6e6f0" opacity="0.51"/><circle cx="377.1" cy="224.6" r="1.14" fill="#e6e6f0" opacity="0.59"/><circle cx="372.2" cy="222.6" r="0.66" fill="#e6e6f0" opacity="0.17"/><circle cx="356.6" cy="227.0" r="1.61" fill="#e6e6f0" opacity="0.42"/><circle cx="433.8" cy="223.7" r="0.85" fill="#e6e6f0" opacity="0.34"/><circle cx="337.9" cy="233.7" r="0.95" fill="#e6e6f0" opacity="0.30"/><circle cx="380.2" cy="234.3" r="0.95" fill="#e6e6f0" opacity="0.42"/><circle cx="386.0" cy="234.8" r="0.57" fill="#e6e6f0" opacity="0.13"/><circle cx="410.2" cy="234.3" r="0.76" fill="#b39f8c" opacity="0.17"/><circle cx="440.9" cy="238.1" r="1.61" fill="#e6e6f0" opacity="0.68"/><circle cx="431.8" cy="241.5" r="0.85" fill="#b39f8c" opacity="0.26"/><circle cx="371.9" cy="247.7" r="0.85" fill="#b39f8c" opacity="0.26"/><circle cx="345.9" cy="258.6" r="0.76" fill="#e6e6f0" opacity="0.17"/><circle cx="376.6" cy="262.4" r="1.04" fill="#e6e6f0" opacity="0.34"/><circle cx="374.6" cy="267.7" r="0.95" fill="#e6e6f0" opacity="0.42"/><circle cx="428.5" cy="260.6" r="0.57" fill="#e6e6f0" opacity="0.13"/><circle cx="406.7" cy="271.5" r="0.57" fill="#e6e6f0" opacity="0.13"/><circle cx="333.9" cy="273.7" r="1.42" fill="#e6e6f0" opacity="0.68"/><circle cx="398.0" cy="286.2" r="1.52" fill="#e6e6f0" opacity="0.77"/><circle cx="425.6" cy="286.0" r="1.14" fill="#e6e6f0" opacity="0.59"/><circle cx="428.9" cy="289.1" r="1.42" fill="#b39f8c" opacity="0.42"/><circle cx="345.0" cy="291.1" r="1.33" fill="#e6e6f0" opacity="0.51"/><circle cx="360.8" cy="291.8" r="1.04" fill="#e6e6f0" opacity="0.34"/><circle cx="251.2" cy="1.9" r="0.95" fill="#e6e6f0" opacity="0.42"/><circle cx="157.8" cy="7.1" r="0.95" fill="#e6e6f0" opacity="0.38"/><circle cx="141.2" cy="10.4" r="0.66" fill="#e6e6f0" opacity="0.17"/><circle cx="260.1" cy="6.8" r="0.76" fill="#e6e6f0" opacity="0.26"/><circle cx="278.3" cy="8.5" r="1.52" fill="#e6e6f0" opacity="0.38"/><circle cx="176.0" cy="17.4" r="0.76" fill="#e6e6f0" opacity="0.17"/><circle cx="218.3" cy="18.5" r="1.80" fill="#e6e6f0" opacity="0.51"/><circle cx="121.8" cy="23.7" r="1.71" fill="#e6e6f0" opacity="0.42"/><circle cx="152.2" cy="26.5" r="1.14" fill="#b39f8c" opacity="0.26"/><circle cx="271.7" cy="32.8" r="0.85" fill="#e6e6f0" opacity="0.30"/><circle cx="309.0" cy="33.1" r="0.76" fill="#e6e6f0" opacity="0.21"/><circle cx="130.9" cy="40.0" r="1.23" fill="#e6e6f0" opacity="0.42"/><circle cx="126.8" cy="42.2" r="1.04" fill="#b39f8c" opacity="0.30"/><circle cx="288.5" cy="40.9" r="1.61" fill="#e6e6f0" opacity="0.59"/><circle cx="319.5" cy="39.7" r="1.23" fill="#e6e6f0" opacity="0.68"/><circle cx="165.5" cy="43.9" r="1.14" fill="#e6e6f0" opacity="0.38"/><circle cx="148.6" cy="50.5" r="1.33" fill="#e6e6f0" opacity="0.51"/><circle cx="153.6" cy="49.4" r="1.14" fill="#e6e6f0" opacity="0.42"/><circle cx="119.6" cy="50.5" r="0.66" fill="#e6e6f0" opacity="0.17"/><circle cx="318.1" cy="55.2" r="0.95" fill="#e6e6f0" opacity="0.34"/><circle cx="280.0" cy="39.5" r="0.66" fill="#e6e6f0" opacity="0.17"/><circle cx="140.6" cy="253.5" r="1.14" fill="#b39f8c" opacity="0.30"/><circle cx="187.3" cy="272.3" r="0.95" fill="#b39f8c" opacity="0.26"/><circle cx="220.0" cy="270.9" r="1.52" fill="#e6e6f0" opacity="0.42"/><circle cx="177.9" cy="281.4" r="1.52" fill="#e6e6f0" opacity="0.59"/><circle cx="214.7" cy="281.4" r="0.95" fill="#e6e6f0" opacity="0.38"/><circle cx="226.9" cy="283.9" r="0.85" fill="#e6e6f0" opacity="0.30"/><circle cx="242.1" cy="279.8" r="1.14" fill="#b39f8c" opacity="0.38"/><circle cx="293.8" cy="259.9" r="0.76" fill="#e6e6f0" opacity="0.26"/><circle cx="298.2" cy="276.7" r="0.85" fill="#b39f8c" opacity="0.26"/><circle cx="318.1" cy="258.2" r="0.66" fill="#e6e6f0" opacity="0.17"/></g>
<rect x="0" y="0" width="1" height="300" fill="#a9aab2"/><rect x="1" y="0" width="1" height="300" fill="#000"/><rect x="2" y="0" width="1" height="300" fill="#283156"/><rect x="448" y="0" width="1" height="300" fill="#02023a"/><rect x="449" y="0" width="1" height="300" fill="#5f6480"/>
</svg><span class="g" style="left:109.87px;top:120.66px;font-weight:bold;transform:scale(0.1393,0.3304);text-shadow:11.3px 0 0 #fff,-11.3px 0 0 #fff;">H</span><span class="g" style="left:135.59px;top:120.66px;font-weight:bold;transform:scale(0.1095,0.3304);text-shadow:17.5px 0 0 #fff,-17.5px 0 0 #fff;">E</span><span class="g" style="left:154.89px;top:120.66px;font-weight:bold;transform:scale(0.1203,0.3304);text-shadow:14.6px 0 0 #fff,-14.6px 0 0 #fff;">L</span><span class="g" style="left:174.60px;top:120.66px;font-weight:bold;transform:scale(0.1162,0.3304);text-shadow:15.6px 0 0 #fff,-15.6px 0 0 #fff;">L</span><span class="g" style="left:194.15px;top:120.66px;font-weight:bold;transform:scale(0.1064,0.3304);text-shadow:18.8px 0 0 #fff,-18.8px 0 0 #fff;">O</span><span class="g" style="left:213.61px;top:120.66px;font-weight:normal;transform:scale(0.1893,0.3304);text-shadow:3.2px 0 0 #fff,-3.2px 0 0 #fff;">W</span><span class="g" style="left:251.06px;top:120.66px;font-weight:normal;transform:scale(0.1263,0.3304);text-shadow:7.9px 0 0 #fff,-7.9px 0 0 #fff;">O</span><span class="g" style="left:274.48px;top:120.66px;font-weight:normal;transform:scale(0.1340,0.3304);text-shadow:6.9px 0 0 #fff,-6.9px 0 0 #fff;">R</span><span class="g" style="left:297.44px;top:120.66px;font-weight:normal;transform:scale(0.1357,0.3304);text-shadow:6.7px 0 0 #fff,-6.7px 0 0 #fff;">L</span><span class="g" style="left:317.44px;top:120.66px;font-weight:normal;transform:scale(0.1200,0.3304);text-shadow:8.8px 0 0 #fff,-8.8px 0 0 #fff;">D</span></div>

<!-- status -->
<div class="a" style="left:0;top:671px;width:868px;height:1px;background:#474849;"></div>
<svg style="left:4px;top:674px" width="16" height="16" viewBox="0 0 16 16" fill="none" stroke="#c4c4c4"><path d="M1.5 3V13M14.5 3V13"/><rect x="3.5" y="3.5" width="9" height="9"/></svg>
<svg style="left:796px;top:674px" width="16" height="16" viewBox="0 0 16 16"><rect x="5" y="7" width="8" height="6" fill="#afb1b3"/><path d="M2.8 6.5V5a2.3 2.3 0 014.6 0V7" fill="none" stroke="#afb1b3" stroke-width="1.4"/></svg>
<svg style="left:820px;top:674px" width="16" height="16" viewBox="0 0 16 16" fill="#afb1b3"><path d="M2 12C3.5 10.5 3.5 9 3.5 7a4 4.2 0 018 0c0 2 0 3.500 1.500 5Z"/><path d="M6 13.2H9A1.500 1.500 0 016 13.200Z"/></svg>
<svg style="left:842px;top:674px" width="16" height="16" viewBox="0 0 16 16"><use href="#gear"/></svg>
</body></html>
